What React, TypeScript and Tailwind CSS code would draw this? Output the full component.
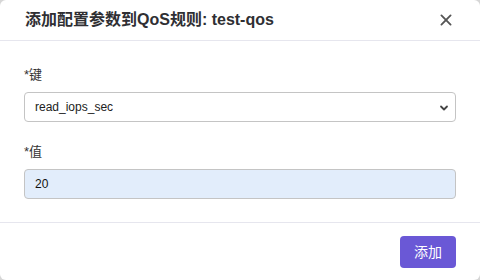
import React from "react";

export default function App() {
  const font = { fontFamily: '"Liberation Sans", "Noto Sans CJK SC", sans-serif' };
  return (
    <div className="w-[480px] h-[280px] bg-[#d6d6d6]" style={font}>
      <div className="w-[480px] h-[280px] bg-white rounded-[6px] flex flex-col overflow-hidden">
        <div className="h-[41px] border-b border-[#e6e6ee] flex items-center justify-between pl-[25px] pr-[24px]">
          <div className="text-[16px] font-bold text-[#2f2f33] leading-none">添加配置参数到QoS规则: test-qos</div>
          <svg width="20" height="20" viewBox="0 0 24 24" fill="none" stroke="#555" strokeWidth="2.2" strokeLinecap="round">
            <path d="M17.5 6.5 6.5 17.5" />
            <path d="m6.5 6.5 11 11" />
          </svg>
        </div>
        <div className="flex-1 px-6 pt-6 flex flex-col">
          <div className="text-[13px] leading-[20px] text-[#333] mb-[7px]">*键</div>
          <div className="relative h-[30px] border border-[#c4c4c4] rounded-[4px] flex items-center pl-[10px] text-[12px] text-[#222]">
            read_iops_sec
            <svg className="absolute right-[6px] top-[11px]" width="10" height="8" viewBox="0 0 10 8" fill="none" stroke="#444" strokeWidth="1.8" strokeLinecap="round" strokeLinejoin="round">
              <path d="M2 2.5 5 5.5 8 2.5" />
            </svg>
          </div>
          <div className="text-[13px] leading-[20px] text-[#333] mt-[20px] mb-[7px]">*值</div>
          <div className="h-[30px] border border-[#c4c4c4] bg-[#e2edfb] rounded-[4px] flex items-center pl-[10px] text-[12px] text-[#111]">
            20
          </div>
        </div>
        <div className="h-[58px] border-t border-[#e6e6ee] flex items-start justify-end pr-6 pt-[13px]">
          <button className="w-[56px] h-[32px] rounded-[4px] bg-[#6a58d6] text-white text-[14px]">添加</button>
        </div>
      </div>
    </div>
  );
}
